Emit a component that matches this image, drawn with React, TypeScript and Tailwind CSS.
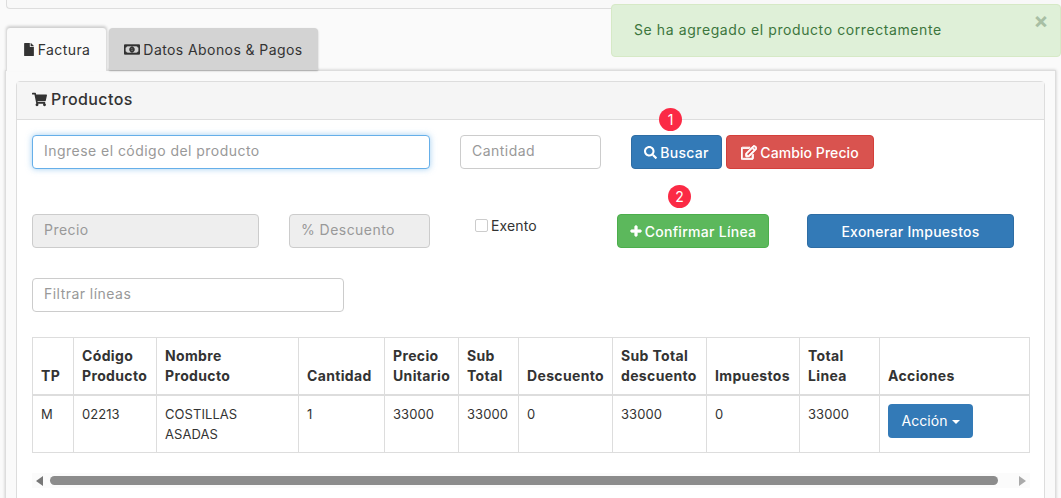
import { FaFile, FaRegMoneyBillAlt, FaShoppingCart, FaSearch, FaRegEdit, FaPlus } from "react-icons/fa";

const font = "font-['Inter','Liberation_Sans',sans-serif]";
const inputBase =
  "h-[34px] rounded border pl-[11px] pr-3 text-[14px] leading-[30px] tracking-[0.033em] text-[#999]";
const btnBase =
  "flex h-[34px] items-center justify-center gap-[3px] rounded border text-[14px] font-medium tracking-[0.02em] text-white";

const headers: [string, string?][] = [
  ["TP"],
  ["Código", "Producto"],
  ["Nombre", "Producto"],
  ["Cantidad"],
  ["Precio", "Unitario"],
  ["Sub", "Total"],
  ["Descuento"],
  ["Sub Total", "descuento"],
  ["Impuestos"],
  ["Total", "Linea"],
  ["Acciones"],
];

const colWidths = [41, 83, 142, 86, 74, 60, 94, 94, 93, 80, 150];

function Badge({ n, className }: { n: number; className: string }) {
  return (
    <span
      className={`absolute flex h-[23px] w-[23px] items-center justify-center rounded-full bg-[#fb2a45] text-[14px] text-white ${className}`}
    >
      {n}
    </span>
  );
}

export default function App() {
  const cell = "border border-[#ddd] px-2 pt-2 align-top text-[13px] leading-5 tracking-[0.005em]";
  return (
    <div className={`relative h-[498px] w-[1061px] overflow-hidden bg-[#fafafa] text-[#333] ${font}`}>
      {/* barra superior cortada */}
      <div className="ml-[6px] h-[9px] rounded-b border-b border-l border-[#ddd] bg-[#f8f8f8]" />

      {/* alerta flotante */}
      <div className="absolute left-[611px] top-[4px] flex h-[53px] w-[450px] items-start justify-between rounded border border-[#d6e9c6] bg-[#dff0d8] pl-[22px] pr-[11px] pt-[15px] text-[14px] leading-5 tracking-[0.042em] text-[#3c763d]">
        <span>Se ha agregado el producto correctamente</span>
        <span className="-mt-[10px] text-[22px] font-bold leading-5 text-[#a8bfa4]">×</span>
      </div>

      {/* tabs */}
      <div className="mt-[19px] ml-[6px] flex h-[42px] items-stretch gap-[2px] text-[14px] tracking-[0.03em]">
        <div className="z-10 flex h-[43px] w-[101px] items-center justify-center gap-[3px] rounded-t border-x border-[#ddd] bg-[#fafafa] shadow-[0_-2px_3px_rgba(0,0,0,0.18)]">
          <FaFile className="h-[13px] w-[12px] text-[#333]" />
          <span>Factura</span>
        </div>
        <div className="flex w-[209px] items-center justify-center gap-[3px] rounded-t bg-[#d3d3d3] shadow-[0_1px_2px_rgba(0,0,0,0.25)]">
          <FaRegMoneyBillAlt className="h-[15px] w-[16px] stroke-[30] text-[#333]" />
          <span>Datos Abonos &amp; Pagos</span>
        </div>
      </div>

      {/* contenedor de la pestaña */}
      <div className="ml-[5px] mr-[5px] h-[430px] border border-[#ddd] bg-[#fafafa] px-[10px] pt-[10px] shadow-[0_0_3px_rgba(0,0,0,0.2)]">
        <div className="h-[420px] rounded-t border border-[#ddd] bg-white">
          <div className="flex h-[38px] items-center gap-1 border-b border-[#ddd] bg-[#f5f5f5] pb-[3px] pl-[15px] text-[16px] font-medium tracking-[0.025em]">
            <FaShoppingCart className="h-[15px] w-[15px] text-[#333]" />
            <span>Productos</span>
          </div>

          <div className="relative px-[15px] pt-[15px]">
            <Badge n={1} className="left-[642px] top-[-12px]" />
            <Badge n={2} className="left-[651px] top-[65px]" />

            {/* fila 1 */}
            <div className="flex">
              <div className={`${inputBase} w-[398px] border-[#66afe9] bg-white shadow-[0_0_6px_rgba(102,175,233,0.6)]`}>
                Ingrese el código del producto
              </div>
              <div className={`${inputBase} ml-[30px] w-[141px] border-[#ccc] bg-white`}>Cantidad</div>
              <div className={`${btnBase} ml-[30px] w-[91px] border-[#2e6da4] bg-[#337ab7]`}>
                <FaSearch className="h-[13px] w-[13px]" />
                Buscar
              </div>
              <div className={`${btnBase} ml-[4px] w-[148px] border-[#d43f3a] bg-[#d9534f] tracking-[0.005em]`}>
                <FaRegEdit className="h-[15px] w-[16px] stroke-[30]" />
                Cambio Precio
              </div>
            </div>

            {/* fila 2 */}
            <div className="mt-[45px] flex">
              <div className={`${inputBase} w-[227px] border-[#ccc] bg-[#eee]`}>Precio</div>
              <div className={`${inputBase} ml-[30px] w-[141px] border-[#ccc] bg-[#eee]`}>% Descuento</div>
              <div className="ml-[45px] flex h-[22px] w-[142px] items-center gap-[3px] text-[14px] tracking-[0.01em]">
                <span className="h-[13px] w-[13px] rounded-[2px] border border-[#ccc] bg-white" />
                Exento
              </div>
              <div className={`${btnBase} w-[152px] border-[#4cae4c] bg-[#5cb85c]`}>
                <FaPlus className="h-[12px] w-[12px] stroke-[40]" />
                Confirmar Línea
              </div>
              <div className={`${btnBase} ml-[38px] w-[207px] border-[#2e6da4] bg-[#337ab7]`}>
                Exonerar Impuestos
              </div>
            </div>

            {/* filtro */}
            <div className={`${inputBase} mt-[30px] w-[312px] border-[#ccc] bg-white`}>Filtrar líneas</div>

            {/* tabla */}
            <table className="mt-[25px] w-[997px] table-fixed border-collapse">
              <colgroup>
                {colWidths.map((w, i) => (
                  <col key={i} width={w} />
                ))}
              </colgroup>
              <thead>
                <tr className="h-[57px]">
                  {headers.map(([a, b], i) => (
                    <th
                      key={i}
                      className="border border-b-2 border-[#ddd] px-2 pb-2 text-left align-bottom text-[14px] font-bold leading-5 tracking-[0.025em]"
                    >
                      {a}
                      {b && <br />}
                      {b}
                    </th>
                  ))}
                </tr>
              </thead>
              <tbody>
                <tr className="h-[58px]">
                  <td className={cell}>M</td>
                  <td className={cell}>02213</td>
                  <td className={cell}>
                    COSTILLAS
                    <br />
                    ASADAS
                  </td>
                  <td className={cell}>1</td>
                  <td className={cell}>33000</td>
                  <td className={cell}>33000</td>
                  <td className={cell}>0</td>
                  <td className={cell}>33000</td>
                  <td className={cell}>0</td>
                  <td className={cell}>33000</td>
                  <td className={cell}>
                    <div className="flex h-[34px] w-[85px] items-center justify-center gap-1 rounded bg-[#337ab7] text-[14px] text-white">
                      Acción
                      <span className="mt-[2px] border-x-4 border-t-4 border-x-transparent border-t-white" />
                    </div>
                  </td>
                </tr>
              </tbody>
            </table>

            {/* scrollbar */}
            <div className="mt-[20px] flex h-[15px] w-[998px] items-center bg-[#fbfbfb]">
              <span className="ml-[4px] border-y-[5px] border-r-[7px] border-y-transparent border-r-[#777]" />
              <div className="ml-[7px] h-[9px] w-[948px] rounded-full bg-[#8c8c8c]" />
              <span className="ml-[21px] border-y-[5px] border-l-[7px] border-y-transparent border-l-[#aaa]" />
            </div>
          </div>
        </div>
      </div>
    </div>
  );
}
